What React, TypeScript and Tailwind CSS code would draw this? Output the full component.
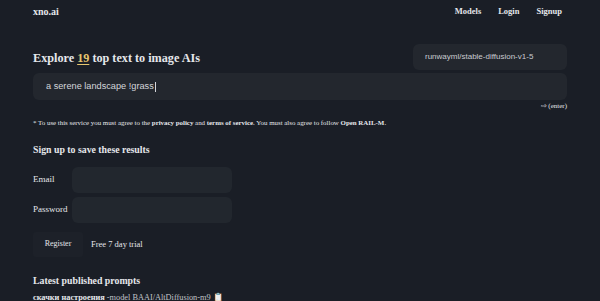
import React from "react";

export default function App() {
  const serif = { fontFamily: '"Liberation Serif", "Times New Roman", serif' };
  return (
    <div
      className="w-[600px] h-[301px] overflow-hidden bg-[#1a1e26] text-[#e5e7eb]"
      style={serif}
    >
      <nav className="flex items-center justify-between pl-[33px] pr-[38px] h-[22px] pt-[1px]">
        <span className="text-[10px] font-bold">xno.ai</span>
        <div className="flex gap-[17px] text-[8.5px] font-bold">
          <span>Models</span>
          <span>Login</span>
          <span>Signup</span>
        </div>
      </nav>
      <div className="px-[33px] mt-[22px]">
        <div className="flex items-center justify-between">
          <h1 className="text-[12.2px] font-bold leading-none mt-[2px]">
            Explore <span className="text-[#e6c670] underline underline-offset-2">19</span> top text to image AIs
          </h1>
          <div
            className="w-[154px] h-[26px] rounded-[6px] bg-[#23272e] flex items-center pl-[12px] text-[8px] text-[#c9cbd0]"
            style={{ fontFamily: '"Liberation Sans", Arial, sans-serif' }}
          >
            runwayml/stable-diffusion-v1-5
          </div>
        </div>
        <div
          className="mt-[3px] h-[27px] rounded-[6px] bg-[#23272e] flex items-center pl-[13px] text-[9.2px] text-[#d4d6da]"
          style={{ fontFamily: '"Liberation Sans", Arial, sans-serif' }}
        >
          a serene landscape !grass<span className="inline-block w-[1px] h-[10px] bg-[#d4d6da] ml-[1px]" />
        </div>
        <div className="text-right text-[7px] leading-none mt-[3px]">⇨ (enter)</div>
        <p className="text-[6.9px] mt-[10px] leading-none">
          * To use this service you must agree to the <b>privacy policy</b> and <b>terms of service</b>. You must also agree to follow <b>Open RAIL-M</b>.
        </p>
        <h2 className="text-[9.8px] font-bold mt-[18px] leading-none">Sign up to save these results</h2>
        <div className="mt-[12px] flex flex-col gap-[4px]">
          <div className="flex items-center">
            <span className="w-[39px] text-[9px]">Email</span>
            <div className="w-[160px] h-[26px] rounded-[6px] bg-[#22272e]" />
          </div>
          <div className="flex items-center">
            <span className="w-[39px] text-[9px]">Password</span>
            <div className="w-[160px] h-[26px] rounded-[6px] bg-[#22272e]" />
          </div>
        </div>
        <div className="flex items-center mt-[9px] gap-[8px]">
          <div className="w-[50px] h-[25px] rounded-[3px] bg-[#1d2129] flex items-center justify-center text-[8px]">Register</div>
          <span className="text-[8.5px]">Free 7 day trial</span>
        </div>
        <h2 className="text-[9.8px] font-bold mt-[19px] leading-none">Latest published prompts</h2>
        <div className="text-[8.3px] mt-[8px] whitespace-nowrap leading-none">
          <b>скачки настроения</b> <span className="text-[#c0c3c8]">-model BAAI/AltDiffusion-m9</span> 📋
        </div>
      </div>
    </div>
  );
}
